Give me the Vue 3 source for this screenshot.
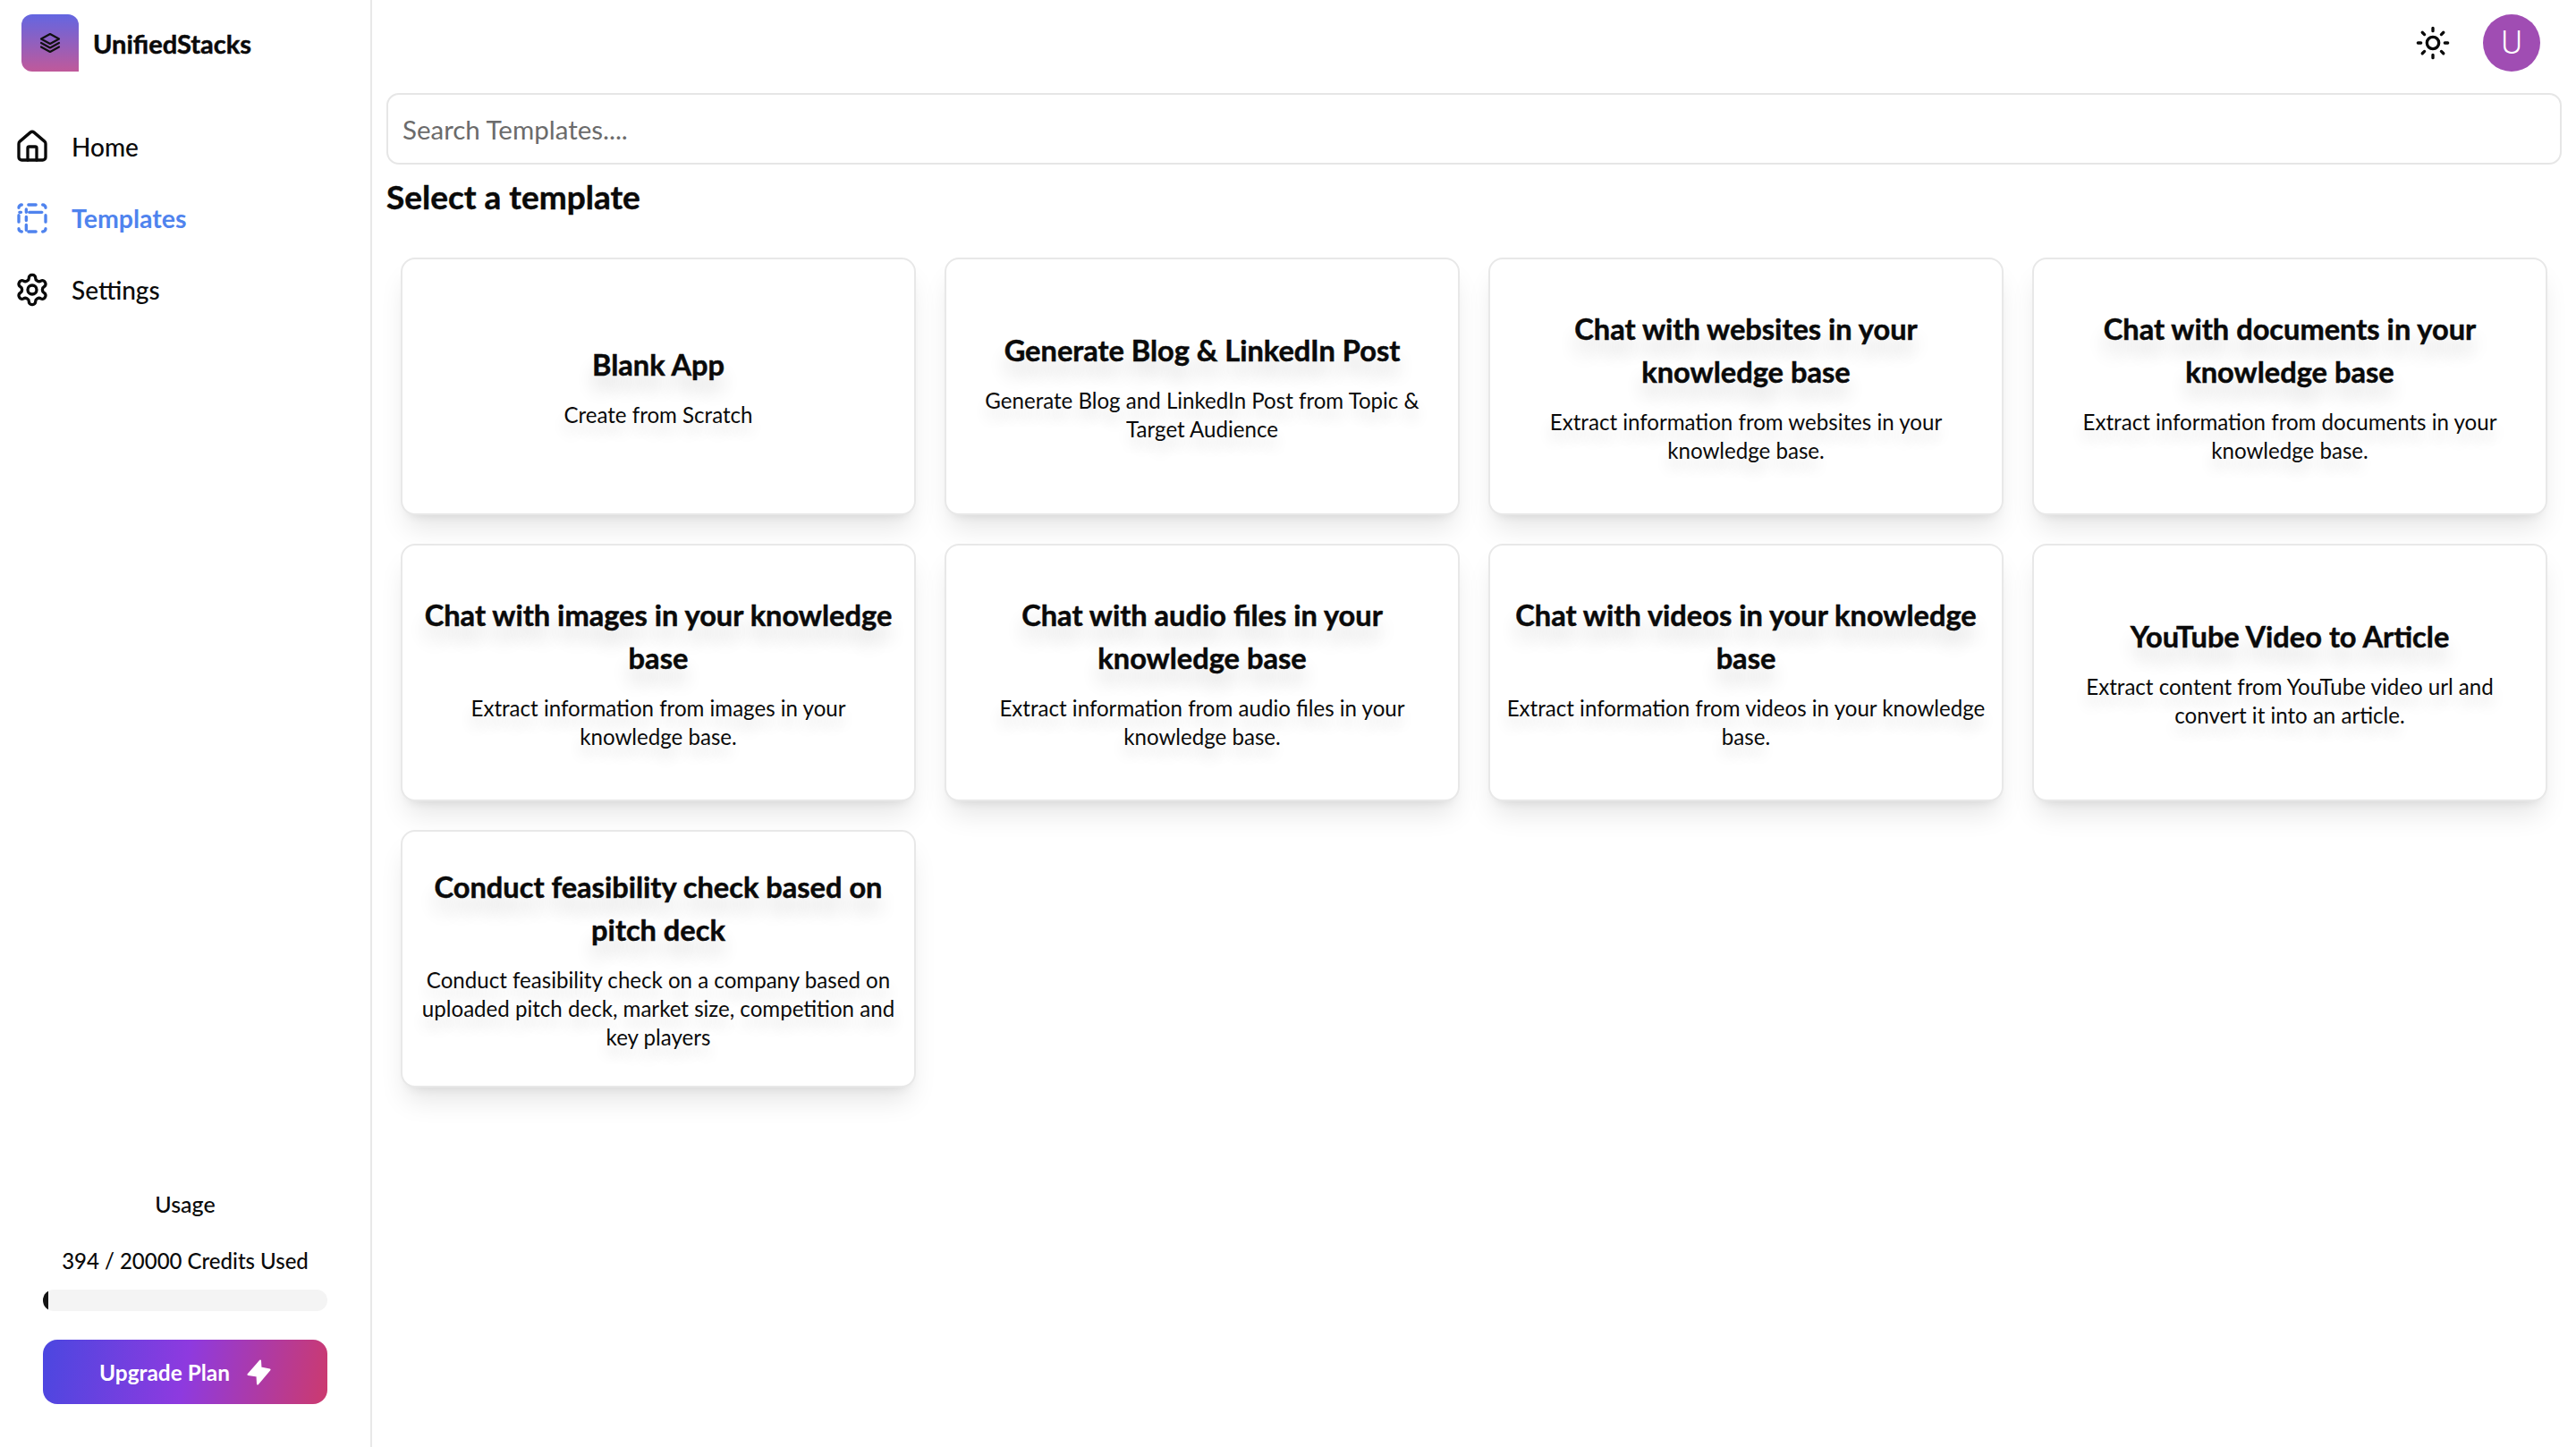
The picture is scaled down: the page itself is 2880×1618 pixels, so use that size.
<template>
  <div class="app-shell">
    <aside class="sidebar">
      <div class="brand">
        <div class="brand-logo">
          <svg width="24" height="24" viewBox="0 0 24 24" fill="none" stroke="#111" stroke-width="2.2" stroke-linejoin="round" stroke-linecap="round">
            <path d="M12 2 22 7.500 12 13 2 7.500z" />
            <path d="M2 12l10 5.500L22 12" />
            <path d="M2 16.500 12 22l10-5.500" />
          </svg>
        </div>
        <span class="brand-name">UnifiedStacks</span>
      </div>

      <nav class="nav">
        <a class="nav-item">
          <svg class="nav-icon" viewBox="0 0 24 24">
            <path d="M15 21v-8a1 1 0 0 0-1-1h-4a1 1 0 0 0-1 1v8" />
            <path d="M3 10a2 2 0 0 1 .709-1.528l7-5.999a2 2 0 0 1 2.582 0l7 5.999A2 2 0 0 1 21 10v9a2 2 0 0 1-2 2H5a2 2 0 0 1-2-2z" />
          </svg>
          Home
        </a>
        <a class="nav-item active">
          <svg class="nav-icon" viewBox="0 0 24 24">
            <path d="M5 3a2 2 0 0 0-2 2M19 3a2 2 0 0 1 2 2M21 19a2 2 0 0 1-2 2M5 21a2 2 0 0 1-2-2" />
            <path d="M9.500 3h5M9.500 21h5M3 10v4.500M21 10v4.500" />
            <path d="M3.500 8h1M8 6v2M10 8h8.500M8 11v2.500M8 16.500v3.500" />
          </svg>
          Templates
        </a>
        <a class="nav-item">
          <svg class="nav-icon" viewBox="0 0 24 24">
            <path d="M12.22 2h-.44a2 2 0 0 0-2 2v.18a2 2 0 0 1-1 1.73l-.43.25a2 2 0 0 1-2 0l-.15-.08a2 2 0 0 0-2.73.73l-.22.38a2 2 0 0 0 .73 2.73l.15.1a2 2 0 0 1 1 1.72v.51a2 2 0 0 1-1 1.74l-.15.09a2 2 0 0 0-.73 2.73l.22.38a2 2 0 0 0 2.73.73l.15-.08a2 2 0 0 1 2 0l.43.25a2 2 0 0 1 1 1.73V20a2 2 0 0 0 2 2h.44a2 2 0 0 0 2-2v-.18a2 2 0 0 1 1-1.73l.43-.25a2 2 0 0 1 2 0l.15.08a2 2 0 0 0 2.73-.73l.22-.39a2 2 0 0 0-.73-2.73l-.15-.08a2 2 0 0 1-1-1.74v-.5a2 2 0 0 1 1-1.74l.15-.09a2 2 0 0 0 .73-2.73l-.22-.38a2 2 0 0 0-2.73-.73l-.15.08a2 2 0 0 1-2 0l-.43-.25a2 2 0 0 1-1-1.73V4a2 2 0 0 0-2-2z" />
            <circle cx="12" cy="12" r="3" />
          </svg>
          Settings
        </a>
      </nav>

      <div class="usage">
        <div class="usage-title">Usage</div>
        <div class="usage-count">394 / 20000 Credits Used</div>
        <div class="usage-track">
          <div class="usage-fill" :style="{ width: usagePercent + '%' }"></div>
        </div>
        <button class="upgrade">
          Upgrade Plan
          <svg width="27" height="29" viewBox="0 0 27 29" fill="#fff" stroke="#fff" stroke-width="2" stroke-linejoin="round">
            <path d="M15 1.500 1.500 17l10 1.500L12 27.500 25.500 11.500l-10-2z" />
          </svg>
        </button>
      </div>
    </aside>

    <main class="main">
      <header class="topbar">
        <svg class="theme-icon" viewBox="0 0 24 24">
          <circle cx="12" cy="12" r="4" />
          <path d="M12 2v2M12 20v2M4.930 4.930l1.410 1.410M17.660 17.660l1.410 1.410M2 12h2M20 12h2M6.340 17.660l-1.410 1.410M19.070 4.930l-1.410 1.410" />
        </svg>
        <div class="avatar">U</div>
      </header>

      <div class="search">Search Templates....</div>
      <h2 class="page-title">Select a template</h2>

      <div class="template-grid">
        <div v-for="item in templates" :key="item.title" class="template-card">
          <h3 class="card-title">{{ item.title }}</h3>
          <p class="card-desc">{{ item.desc }}</p>
        </div>
      </div>
    </main>
  </div>
</template>

<script setup>
const usagePercent = 1.97

// line breaks kept where the page wraps them
const templates = [
  { title: 'Blank App', desc: 'Create from Scratch' },
  { title: 'Generate Blog & LinkedIn Post', desc: 'Generate Blog and LinkedIn Post from Topic &\nTarget Audience' },
  { title: 'Chat with websites in your\nknowledge base', desc: 'Extract information from websites in your\nknowledge base.' },
  { title: 'Chat with documents in your\nknowledge base', desc: 'Extract information from documents in your\nknowledge base.' },
  { title: 'Chat with images in your knowledge\nbase', desc: 'Extract information from images in your\nknowledge base.' },
  { title: 'Chat with audio files in your\nknowledge base', desc: 'Extract information from audio files in your\nknowledge base.' },
  { title: 'Chat with videos in your knowledge\nbase', desc: 'Extract information from videos in your knowledge\nbase.' },
  { title: 'YouTube Video to Article', desc: 'Extract content from YouTube video url and\nconvert it into an article.' },
  { title: 'Conduct feasibility check based on\npitch deck', desc: 'Conduct feasibility check on a company based on\nuploaded pitch deck, market size, competition and\nkey players' }
]
</script>

<style>
html, body {
  margin: 0;
  background: #fff;
}
</style>

<style scoped>
.app-shell {
  display: flex;
  height: 1618px;
  overflow: hidden;
  background: #fff;
  color: #0a0a0a;
  font-family: "Lato", "Liberation Sans", sans-serif;
}

.sidebar {
  width: 414px;
  flex-shrink: 0;
  display: flex;
  flex-direction: column;
  border-right: 2px solid #e8e8e8;
}

.brand {
  display: flex;
  align-items: center;
  gap: 16px;
  padding: 16px 24px 0;
}

.brand-logo {
  width: 64px;
  height: 64px;
  display: flex;
  align-items: center;
  justify-content: center;
  border-radius: 12px 12px 0 12px;
  background: linear-gradient(180deg, #6366e1, #c0599a);
}

.brand-name {
  font-size: 29px;
  font-weight: 700;
  -webkit-text-stroke: 0.5px #0a0a0a;
}

.nav {
  display: flex;
  flex-direction: column;
  padding: 44px 16px 0;
}

.nav-item {
  height: 80px;
  display: flex;
  align-items: center;
  gap: 24px;
  font-size: 28px;
  font-weight: 500;
}

.nav-item.active {
  color: #4f83ee;
  font-size: 28.500px;
  font-weight: 700;
}

.nav-icon {
  width: 40px;
  height: 40px;
  fill: none;
  stroke: currentColor;
  stroke-width: 2;
  stroke-linecap: round;
  stroke-linejoin: round;
}

.usage {
  margin-top: auto;
  padding: 32px 48px 48px;
  border-radius: 24px;
  text-align: center;
  font-size: 24px;
  font-weight: 500;
}

.usage-title {
  font-size: 25px;
  line-height: 32px;
}

.usage-count {
  margin-top: 32px;
  line-height: 32px;
}

.usage-track {
  height: 24px;
  margin-top: 16px;
  border-radius: 12px;
  overflow: hidden;
  background: #f4f4f4;
}

.usage-fill {
  height: 100%;
  background: #141414;
}

.upgrade {
  width: 100%;
  height: 72px;
  margin-top: 32px;
  display: flex;
  align-items: center;
  justify-content: center;
  gap: 19px;
  border: none;
  border-radius: 16px;
  background: linear-gradient(100deg, #4b47e0, #8e3adf 50%, #cc3a6e);
  color: #fff;
  font-family: inherit;
  font-size: 24.400px;
  font-weight: 700;
}

.main {
  flex: 1;
  min-width: 0;
  padding: 16px 16px 0;
}

.topbar {
  height: 64px;
  display: flex;
  align-items: center;
  justify-content: flex-end;
  gap: 36px;
  padding-right: 24px;
}

.theme-icon {
  width: 40px;
  height: 40px;
  fill: none;
  stroke: #0a0a0a;
  stroke-width: 2;
  stroke-linecap: round;
  stroke-linejoin: round;
}

.avatar {
  width: 64px;
  height: 64px;
  display: flex;
  align-items: center;
  justify-content: center;
  border-radius: 50%;
  background: #a04db3;
  color: #fff;
  font-family: "Roboto", sans-serif;
  font-size: 36px;
  font-weight: 300;
}

.search {
  height: 80px;
  box-sizing: border-box;
  margin-top: 24px;
  display: flex;
  align-items: center;
  padding: 1px 16px 0;
  border: 2px solid #e6e6e6;
  border-radius: 14px;
  color: #6b6b6b;
  font-size: 29.500px;
}

.page-title {
  margin: 8px 0 0;
  font-size: 37px;
  font-weight: 700;
  line-height: 56px;
  -webkit-text-stroke: 0.5px #0a0a0a;
}

.template-grid {
  display: grid;
  grid-template-columns: repeat(4, 1fr);
  grid-auto-rows: 288px;
  gap: 32px;
  padding: 40px 16px 16px;
}

.template-card {
  box-sizing: border-box;
  display: flex;
  flex-direction: column;
  align-items: center;
  justify-content: center;
  gap: 16px;
  padding: 16px 10px;
  border: 2px solid #e8e8e8;
  border-radius: 16px;
  background: #fff;
  box-shadow: 0 20px 30px -6px rgba(0, 0, 0, 0.1), 0 8px 12px -8px rgba(0, 0, 0, 0.1);
  text-align: center;
  white-space: pre-line;
}

.card-title {
  margin: 0;
  font-size: 32.600px;
  font-weight: 700;
  line-height: 48px;
  -webkit-text-stroke: 0.5px #0a0a0a;
  text-shadow: 0 16px 20px rgba(0, 0, 0, 0.16);
}

.card-desc {
  margin: 0;
  font-size: 24.100px;
  line-height: 32px;
  text-shadow: 0 12px 16px rgba(0, 0, 0, 0.14);
}
</style>
